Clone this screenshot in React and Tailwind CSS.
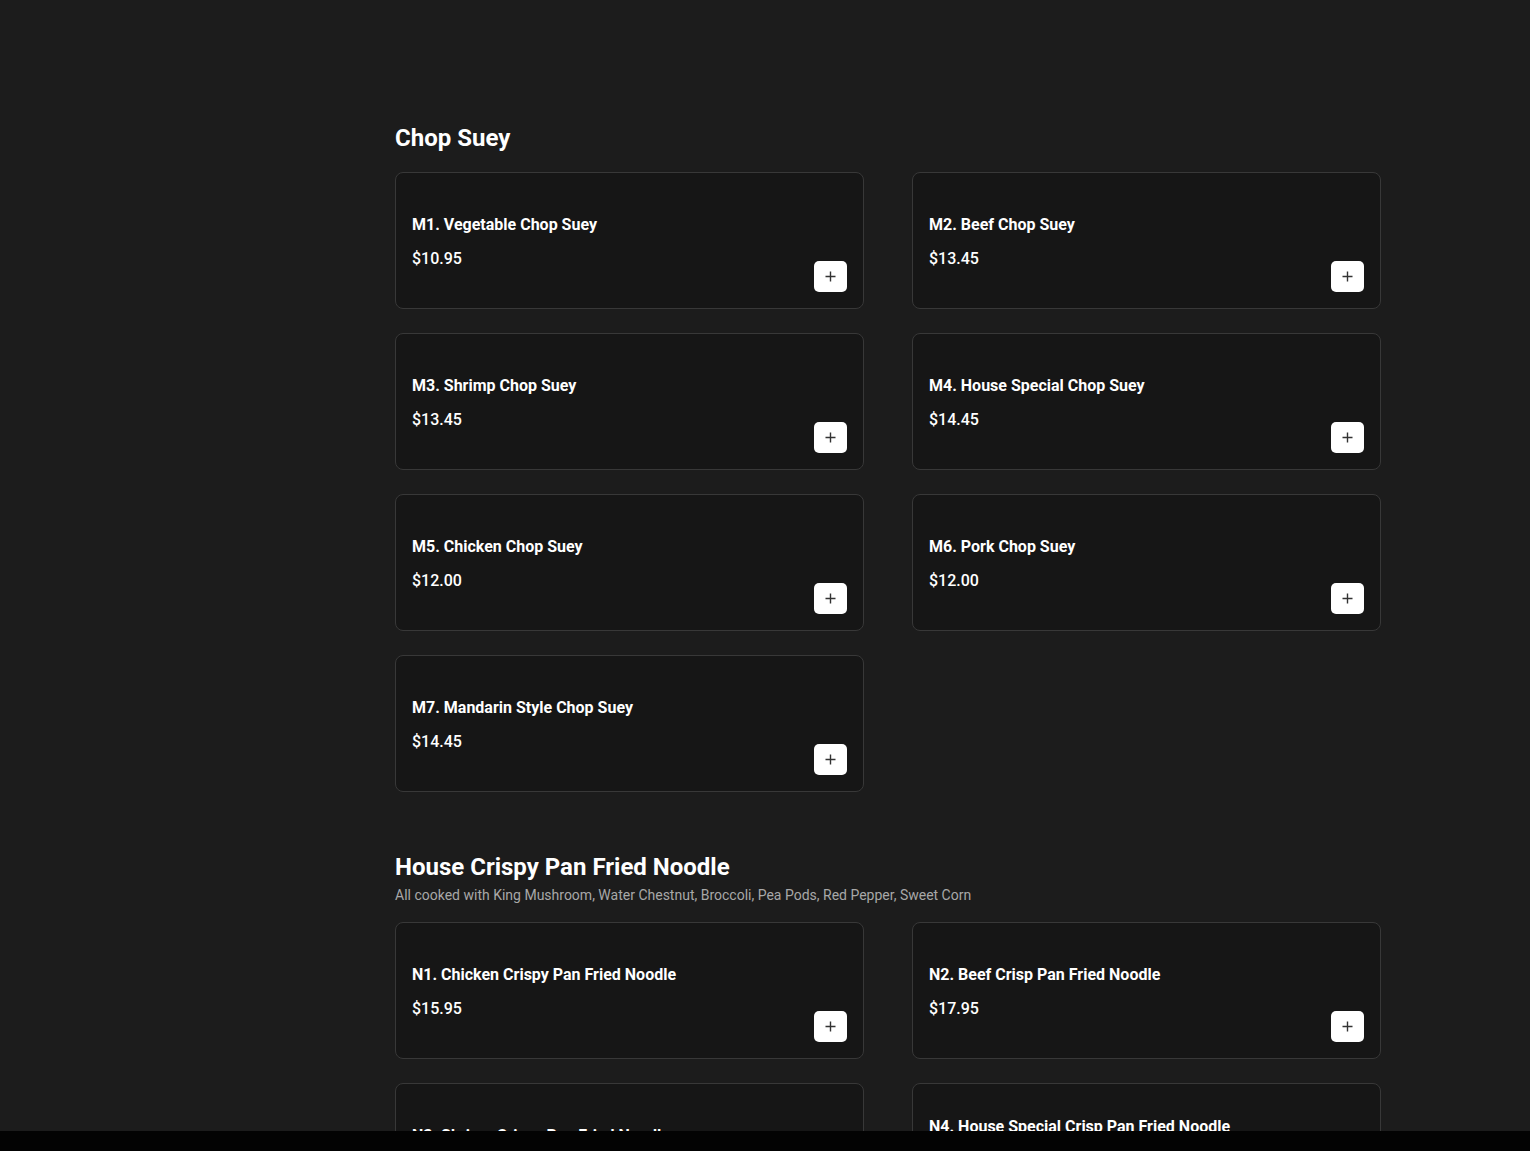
import React from 'react';

const sections = [
  {
    title: 'Chop Suey',
    items: [
      { name: 'M1. Vegetable Chop Suey', price: '10.95' },
      { name: 'M2. Beef Chop Suey', price: '13.45' },
      { name: 'M3. Shrimp Chop Suey', price: '13.45' },
      { name: 'M4. House Special Chop Suey', price: '14.45' },
      { name: 'M5. Chicken Chop Suey', price: '12.00' },
      { name: 'M6. Pork Chop Suey', price: '12.00' },
      { name: 'M7. Mandarin Style Chop Suey', price: '14.45' },
    ],
  },
  {
    title: 'House Crispy Pan Fried Noodle',
    note: 'All cooked with King Mushroom, Water Chestnut, Broccoli, Pea Pods, Red Pepper, Sweet Corn',
    items: [
      { name: 'N1. Chicken Crispy Pan Fried Noodle', price: '15.95' },
      { name: 'N2. Beef Crisp Pan Fried Noodle', price: '17.95' },
      { name: 'N3. Shrimp Crispy Pan Fried Noodle', price: '17.95' },
      { name: 'N4. House Special Crisp Pan Fried Noodle', price: '18.95', desc: 'Chicken, Beef, Shrimp' },
    ],
  },
];

const MenuCard = ({ item }) => (
  <div className="relative flex min-h-[137px] flex-col justify-center gap-[10px] rounded-lg border border-[#383838] bg-[#161616] px-4 pt-[18px] pb-4">
    <h3 className="text-[16px] font-bold leading-6 text-white">{item.name}</h3>
    {item.desc && <p className="-mt-[12px] text-sm leading-5 text-[#a8a8a8]">{item.desc}</p>}
    <p className="text-[16px] font-medium leading-6 text-white">${item.price}</p>
    <button className="absolute bottom-4 right-4 flex h-[31px] w-[33px] items-center justify-center rounded-[5px] bg-white text-[#333]">
      <svg width="11" height="11" viewBox="0 0 11 11" fill="none" stroke="currentColor" strokeWidth="1.4">
        <path d="M5.5 0.5v10M0.5 5.5h10" />
      </svg>
    </button>
  </div>
);

export default function App() {
  return (
    <div className="flex h-screen flex-col bg-[#1c1c1c] font-['Roboto',sans-serif]">
      <div className="flex-1 overflow-hidden">
        <main className="ml-[395px] w-[986px] pt-[122px]">
          {sections.map((s, i) => (
            <section key={s.title} className={i > 0 ? 'mt-[59px]' : ''}>
              <h2 className="text-2xl font-bold leading-8 text-white">{s.title}</h2>
              {s.note && <p className="mt-[2px] text-sm leading-5 text-[#a8a8a8]">{s.note}</p>}
              <div className={s.note ? 'mt-[17px] grid grid-cols-2 gap-x-12 gap-y-6' : 'mt-[18px] grid grid-cols-2 gap-x-12 gap-y-6'}>
                {s.items.map((item) => (
                  <MenuCard key={item.name} item={item} />
                ))}
              </div>
            </section>
          ))}
        </main>
      </div>
      <div className="h-[20px] shrink-0 bg-[#030303]" />
    </div>
  );
}
